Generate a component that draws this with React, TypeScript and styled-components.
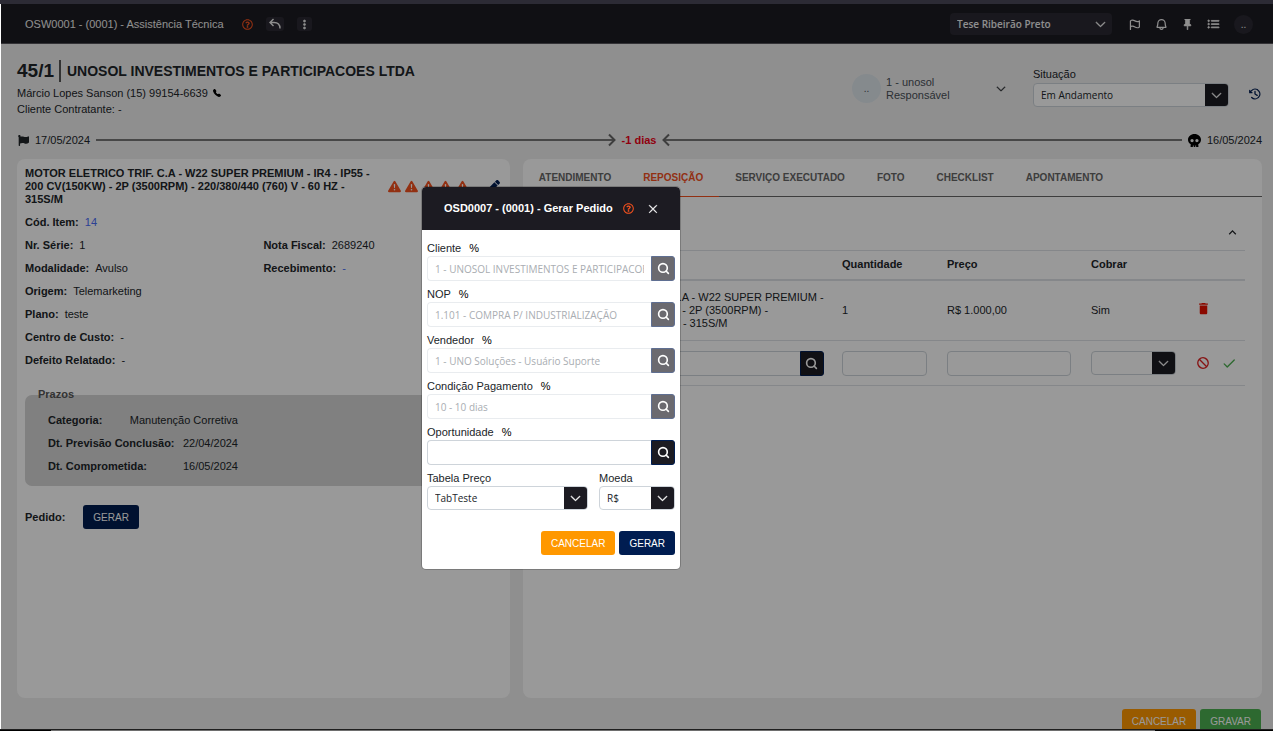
import React from "react";
import styled, { createGlobalStyle, css } from "styled-components";
import {
  BsChevronDown,
  BsExclamationTriangleFill,
  BsListUl,
  BsPinFill,
  BsTelephoneFill,
  BsThreeDotsVertical,
  BsXLg,
} from "react-icons/bs";
import { FaFlag, FaPen, FaRegQuestionCircle, FaSkull } from "react-icons/fa";
import { MdDelete, MdKeyboardArrowUp } from "react-icons/md";
import {
  PiBellBold,
  PiCheckBold,
  PiClockCounterClockwiseBold,
  PiFlagBold,
  PiProhibitBold,
} from "react-icons/pi";
import { LuSearch } from "react-icons/lu";

const ink = "#1c1b22";
const navy = "#001d51";
const orange = "#f4511e";
const inputFont = '"Open Sans", "Noto Sans", sans-serif';

const GlobalStyle = createGlobalStyle`
  * { box-sizing: border-box; }
  body {
    margin: 0;
    overflow: hidden;
    font-family: "Liberation Sans", Arial, sans-serif;
    font-size: 11px;
    line-height: 13px;
    color: #212529;
  }
  button, input, select { font: inherit; color: inherit; margin: 0; }
  button { cursor: pointer; }
  svg { display: block; flex: none; }
`;

const Shell = styled.div`
  display: flex;
  flex-direction: column;
  height: 100vh;
`;

const TopStrip = styled.div`
  flex: none;
  height: 4px;
  background: #2c2b35;
`;

const BottomStrip = styled.div`
  flex: none;
  height: 2px;
  display: flex;
  justify-content: space-between;
  background: #6e6e6e;
  border-top: 1px solid #1f1f1f;
`;

const StripEnd = styled.span<{ $w: number }>`
  width: ${(p) => p.$w}px;
  background: #000;
`;

const Screen = styled.div`
  position: relative;
  flex: 1;
  min-height: 0;
  overflow: hidden;
  display: flex;
  flex-direction: column;
  background: #efefef;
  border-left: 1px solid #fff;
`;

const Header = styled.header`
  flex: none;
  height: 40px;
  display: flex;
  align-items: center;
  justify-content: space-between;
  padding: 1px 20px 0 24px;
  background: ${ink};
  color: #eee;
  border-bottom: 1px solid #55545a;
`;

const HeaderTitle = styled.h1`
  margin: 0 18px 0 0;
  font-size: 11px;
  font-weight: 400;
`;

const Group = styled.div<{ $gap?: number }>`
  display: flex;
  align-items: center;
  gap: ${(p) => p.$gap ?? 0}px;
`;

const IconButton = styled.button<{ $color?: string; $filled?: boolean }>`
  display: inline-flex;
  align-items: center;
  justify-content: center;
  padding: 0;
  border: 0;
  border-radius: 3px;
  background: transparent;
  color: ${(p) => p.$color ?? "inherit"};
  ${(p) =>
    p.$filled &&
    css`
      height: 14px;
      min-width: 14px;
      padding: 0 2px;
      background: #2a2932;
    `}
`;

const SelectBox = styled.div<{ $dark?: boolean }>`
  display: grid;
  height: ${(p) => (p.$dark ? 22 : 24)}px;
  width: ${(p) => (p.$dark ? "162px" : "100%")};
  border-radius: 4px;
  overflow: hidden;
  background: ${(p) => (p.$dark ? "#2a2932" : "#fff")};
  border: ${(p) => (p.$dark ? "0" : "1px solid #ced4da")};

  select {
    grid-area: 1 / 1;
    width: 100%;
    padding: 0 24px 0 7px;
    border: 0;
    appearance: none;
    background: transparent;
    font-family: ${inputFont};
    font-size: 10px;
    font-weight: ${(p) => (p.$dark ? 600 : 400)};
  }
  > span {
    grid-area: 1 / 1;
    justify-self: end;
    width: 23px;
    display: flex;
    align-items: center;
    justify-content: center;
    pointer-events: none;
    color: #fff;
    background: ${(p) => (p.$dark ? "transparent" : ink)};
  }
`;

const HeaderAvatar = styled.span`
  width: 19px;
  height: 19px;
  border-radius: 50%;
  background: #2a2932;
  text-align: center;
  line-height: 19px;
  font-size: 10px;
`;

const Summary = styled.section`
  display: flex;
  justify-content: space-between;
  padding: 16px 11px 0 16px;
`;

const OrderHeading = styled.h2`
  display: flex;
  align-items: center;
  margin: 0 0 3px;
  font-size: 14px;
  line-height: 22px;
  font-weight: 700;
`;

const OrderNumber = styled.span`
  font-size: 19px;
  padding-right: 5px;
  margin-right: 6px;
  border-right: 2px solid #555;
`;

const ContactLine = styled.p`
  display: flex;
  align-items: center;
  gap: 5px;
  margin: 0;
  line-height: 16px;
`;

const Responsible = styled.div`
  display: flex;
  align-items: center;
  justify-content: space-between;
  width: 154px;
  color: #495057;
`;

const Avatar = styled.span`
  width: 29px;
  height: 29px;
  border-radius: 50%;
  background: #dee6ec;
  text-align: center;
  line-height: 29px;
  font-size: 10px;
`;

const Situation = styled.div`
  display: flex;
  align-items: flex-end;
  gap: 19px;
  margin-left: 27px;
  padding-bottom: 2px;
`;

const SituationField = styled.div`
  display: flex;
  flex-direction: column;
  gap: 2px;
  width: 196px;
`;

const HistoryButton = styled(IconButton)`
  height: 26px;
`;

const Timeline = styled.section`
  display: flex;
  align-items: center;
  gap: 6px;
  height: 20px;
  margin: 16px 11px 12px 17px;
`;

const Line = styled.span<{ $dir: "right" | "left" }>`
  flex: 1;
  display: flex;
  align-items: center;
  flex-direction: ${(p) => (p.$dir === "right" ? "row" : "row-reverse")};
  color: #666;
  &::before {
    content: "";
    flex: 1;
    height: 2px;
    background: #777;
  }
  svg {
    margin: ${(p) => (p.$dir === "right" ? "0 0 0 -8px" : "0 -8px 0 0")};
    transform: ${(p) => (p.$dir === "right" ? "none" : "rotate(180deg)")};
  }
`;

const Late = styled.strong`
  color: #f00018;
`;

const Columns = styled.main`
  display: grid;
  grid-template-columns: 2fr 3fr;
  gap: 13px;
  margin: 0 11px 0 16px;
  height: calc(100vh - 192px);
  flex: none;
`;

const Card = styled.section<{ $pad?: string }>`
  min-width: 0;
  background: #fff;
  border-radius: 8px;
  padding: ${(p) => p.$pad ?? "0"};
`;

const ItemHead = styled.div`
  display: flex;
  align-items: center;
  justify-content: space-between;
  margin-bottom: 5px;
`;

const ItemTitle = styled.h3`
  margin: 0;
  width: 345px;
  font-size: 11px;
  line-height: 13px;
`;

const EditButton = styled(IconButton)`
  margin-right: 2px;
`;

const Field = styled.div`
  display: flex;
  align-items: center;
  gap: 6px;
  height: 23px;
`;

const FieldPair = styled.div`
  display: grid;
  grid-template-columns: 1fr 1fr;
`;

const Link = styled.a`
  color: #4a6cf7;
  text-decoration: none;
`;

const Deadlines = styled.fieldset`
  margin: 16px 0 19px;
  padding: 8px 23px;
  border: 0;
  border-radius: 7px;
  background: #d5d5d5;
  legend {
    padding: 0;
    margin-left: -10px;
    height: 13px;
    color: #555;
    font-weight: 700;
  }
`;

const Deadline = styled.div`
  display: flex;
  align-items: center;
  justify-content: space-between;
  width: 190px;
  height: 23px;
`;

const Button = styled.button<{ $bg: string }>`
  height: 24px;
  padding: 0 10px;
  border: 0;
  border-radius: 3px;
  background: ${(p) => p.$bg};
  color: #fff;
  font-size: 10px;
`;

const Tabs = styled.nav`
  display: flex;
  height: 38px;
  border-bottom: 1px solid #666;
`;

const Tab = styled.button<{ $active?: boolean }>`
  height: 38px;
  padding: 0 16px;
  border: 0;
  border-bottom: 1px solid ${(p) => (p.$active ? orange : "transparent")};
  background: transparent;
  color: ${(p) => (p.$active ? orange : "#666")};
  font-size: 10px;
  font-weight: 700;
`;

const TabBody = styled.div`
  padding: 0 17px;
`;

const Collapse = styled.div`
  display: flex;
  align-items: center;
  justify-content: flex-end;
  height: 53px;
  padding: 17px 5px 0 0;
`;

const Table = styled.table`
  width: 100%;
  table-layout: fixed;
  border-collapse: collapse;
  th, td {
    padding: 0 10px;
    text-align: left;
    border-bottom: 1px solid #dee2e6;
  }
  th:first-child, td:first-child { padding: 0 8px 0 0; }
  th {
    height: 29px;
    border-top: 1px solid #dee2e6;
    border-bottom: 2px solid #dee2e6;
  }
`;

const Row = styled.tr<{ $h: number }>`
  height: ${(p) => p.$h}px;
`;

const TextInput = styled.input`
  display: block;
  width: 100%;
  min-width: 0;
  height: 25px;
  padding: 0 7px;
  border: 1px solid #ced4da;
  border-radius: 4px;
  background: #fff;
  font-family: ${inputFont};
  font-size: 10px;
  &:disabled { color: #a9adb2; border-color: #e9ecef; }
`;

const Lookup = styled.div`
  display: flex;
  ${TextInput} { border-radius: 4px 0 0 4px; border-right: 0; }
`;

const LookupButton = styled.button`
  flex: none;
  display: flex;
  align-items: center;
  justify-content: center;
  width: 24px;
  height: 25px;
  padding: 0;
  border: 1px solid ${navy};
  border-radius: 0 3px 3px 0;
  background: ${ink};
  color: #fff;
  &:disabled { background: #6b6a70; border-color: #5f6f92; }
`;

const Footer = styled.footer`
  display: flex;
  justify-content: flex-end;
  gap: 4px;
  padding: 11px 12px 0 0;
`;

const Overlay = styled.div`
  position: absolute;
  inset: 0 0 0 -1px;
  background: rgba(0, 0, 0, 0.4);
`;

const Dialog = styled.div`
  position: absolute;
  top: 183px;
  left: 422px;
  width: 258px;
  border-radius: 4px;
  overflow: hidden;
  background: #fff;
  box-shadow: 0 0 0 1px rgba(0, 0, 0, 0.2);
`;

const DialogHeader = styled.header`
  display: flex;
  align-items: center;
  height: 43px;
  padding-left: 22px;
  background: ${ink};
  color: #fff;
  h2 { margin: 0 10px 0 0; font-size: 11px; line-height: 13px; }
`;

const DialogBody = styled.form`
  padding: 9px 5px 14px;
  display: flex;
  flex-direction: column;
  gap: 4px;
`;

const Control = styled.div`
  display: flex;
  flex-direction: column;
  label { height: 17px; line-height: 18px; color: #212529; }
  label span { margin-left: 8px; color: #000; }
`;

const ControlPair = styled.div`
  display: grid;
  grid-template-columns: 161px 1fr;
  gap: 11px;
`;

const DialogActions = styled.div`
  display: flex;
  justify-content: flex-end;
  gap: 4px;
  margin-top: 17px;
`;

const CloseButton = styled(IconButton)`
  margin-left: 14px;
`;

function Arrow() {
  return (
    <svg width="9" height="14" viewBox="0 0 9 14" fill="none" stroke="currentColor" strokeWidth="2">
      <path d="M2 1.5 7.5 7 2 12.5" />
    </svg>
  );
}

function BackArrow() {
  return (
    <svg width="14" height="12" viewBox="0 0 14 12" fill="none" stroke="currentColor" strokeWidth="1.4">
      <path d="M5.5 1 2 4.5 5.5 8M2 4.5h4c3.6 0 6 2.200 6 6" />
    </svg>
  );
}

function SelectField({ id, label, value, dark }: { id: string; label?: string; value: string; dark?: boolean }) {
  return (
    <SelectBox $dark={dark}>
      <select id={id} aria-label={label} defaultValue={value}>
        <option>{value}</option>
      </select>
      <span>
        <BsChevronDown size={11} stroke="currentColor" strokeWidth={1} />
      </span>
    </SelectBox>
  );
}

function LookupField({ id, label, value, disabled }: { id: string; label?: string; value?: string; disabled?: boolean }) {
  return (
    <Lookup>
      <TextInput id={id} aria-label={label} defaultValue={value} disabled={disabled} />
      <LookupButton type="button" aria-label="Pesquisar" disabled={disabled}>
        <LuSearch size={13} strokeWidth={3} />
      </LookupButton>
    </Lookup>
  );
}

const tabs = ["ATENDIMENTO", "REPOSIÇÃO", "SERVIÇO EXECUTADO", "FOTO", "CHECKLIST", "APONTAMENTO"];

const lookups = [
  { id: "cliente", label: "Cliente", value: "1 - UNOSOL INVESTIMENTOS E PARTICIPACOES LTDA", disabled: true },
  { id: "nop", label: "NOP", value: "1.101 - COMPRA P/ INDUSTRIALIZAÇÃO", disabled: true },
  { id: "vendedor", label: "Vendedor", value: "1 - UNO Soluções - Usuário Suporte", disabled: true },
  { id: "condicao", label: "Condição Pagamento", value: "10 - 10 dias", disabled: true },
  { id: "oportunidade", label: "Oportunidade", value: "", disabled: false },
];

export default function App() {
  return (
    <Shell>
      <GlobalStyle />
      <TopStrip />
      <Screen>
        <Header>
          <Group>
            <HeaderTitle>OSW0001 - (0001) - Assistência Técnica</HeaderTitle>
            <Group $gap={13}>
              <IconButton aria-label="Ajuda" $color={orange}>
                <FaRegQuestionCircle size={11} />
              </IconButton>
              <IconButton aria-label="Voltar" $filled>
                <BackArrow />
              </IconButton>
              <IconButton aria-label="Mais opções" $filled>
                <BsThreeDotsVertical size={11} stroke="currentColor" strokeWidth={1} />
              </IconButton>
            </Group>
          </Group>
          <Group $gap={16}>
            <SelectField id="filial" label="Filial" value="Tese Ribeirão Preto" dark />
            <Group $gap={14}>
              <IconButton aria-label="Sinalizações"><PiFlagBold size={13} /></IconButton>
              <IconButton aria-label="Notificações"><PiBellBold size={13} /></IconButton>
              <IconButton aria-label="Fixar"><BsPinFill size={11} stroke="currentColor" strokeWidth={1} /></IconButton>
              <IconButton aria-label="Lista"><BsListUl size={13} stroke="currentColor" strokeWidth={1} /></IconButton>
              <HeaderAvatar>..</HeaderAvatar>
            </Group>
          </Group>
        </Header>

        <Summary>
          <div>
            <OrderHeading>
              <OrderNumber>45/1</OrderNumber>
              UNOSOL INVESTIMENTOS E PARTICIPACOES LTDA
            </OrderHeading>
            <ContactLine>
              Márcio Lopes Sanson (15) 99154-6639 <BsTelephoneFill size={8} color="#000" />
            </ContactLine>
            <ContactLine>Cliente Contratante: -</ContactLine>
          </div>
          <Group>
            <Responsible>
              <Group $gap={5}>
                <Avatar>..</Avatar>
                <div>
                  1 - unosol
                  <br />
                  Responsável
                </div>
              </Group>
              <IconButton aria-label="Trocar responsável" $color="#212529">
                <BsChevronDown size={10} stroke="currentColor" strokeWidth={1} />
              </IconButton>
            </Responsible>
            <Situation>
              <SituationField>
                <label htmlFor="situacao">Situação</label>
                <SelectField id="situacao" value="Em Andamento" />
              </SituationField>
              <HistoryButton aria-label="Histórico" $color={navy}>
                <PiClockCounterClockwiseBold size={14} />
              </HistoryButton>
            </Situation>
          </Group>
        </Summary>

        <Timeline>
          <FaFlag size={11} />
          <span>17/05/2024</span>
          <Line $dir="right"><Arrow /></Line>
          <Late>-1 dias</Late>
          <Line $dir="left"><Arrow /></Line>
          <FaSkull size={13} color="#000" />
          <span>16/05/2024</span>
        </Timeline>

        <Columns>
          <Card $pad="8px 8px 0">
            <ItemHead>
              <ItemTitle>
                MOTOR ELETRICO TRIF. C.A - W22 SUPER PREMIUM - IR4 - IP55 - 200 CV(150KW) - 2P (3500RPM) -
                220/380/440 (760) V - 60 HZ - 315S/M
              </ItemTitle>
              <Group $gap={4}>
                {[0, 1, 2, 3, 4].map((n) => (
                  <BsExclamationTriangleFill key={n} size={13} color={orange} />
                ))}
              </Group>
              <EditButton aria-label="Editar" $color={navy}><FaPen size={13} /></EditButton>
            </ItemHead>
            <Field><b>Cód. Item:</b> <Link href="#item">14</Link></Field>
            <FieldPair>
              <Field><b>Nr. Série:</b> 1</Field>
              <Field><b>Nota Fiscal:</b> 2689240</Field>
              <Field><b>Modalidade:</b> Avulso</Field>
              <Field><b>Recebimento:</b> <Link href="#recebimento">-</Link></Field>
            </FieldPair>
            <Field><b>Origem:</b> Telemarketing</Field>
            <Field><b>Plano:</b> teste</Field>
            <Field><b>Centro de Custo:</b> -</Field>
            <Field><b>Defeito Relatado:</b> -</Field>
            <Deadlines>
              <legend>Prazos</legend>
              <Deadline><b>Categoria:</b> Manutenção Corretiva</Deadline>
              <Deadline><b>Dt. Previsão Conclusão:</b> 22/04/2024</Deadline>
              <Deadline><b>Dt. Comprometida:</b> 16/05/2024</Deadline>
            </Deadlines>
            <Group $gap={18}>
              <b>Pedido:</b>
              <Button $bg={navy}>GERAR</Button>
            </Group>
          </Card>

          <Card>
            <Tabs>
              {tabs.map((t) => (
                <Tab key={t} $active={t === "REPOSIÇÃO"}>{t}</Tab>
              ))}
            </Tabs>
            <TabBody>
              <Collapse>
                <IconButton aria-label="Recolher"><MdKeyboardArrowUp size={15} /></IconButton>
              </Collapse>
              <Table>
                <colgroup>
                  <col />
                  <col style={{ width: 105 }} />
                  <col style={{ width: 144 }} />
                  <col style={{ width: 105 }} />
                  <col style={{ width: 59 }} />
                </colgroup>
                <thead>
                  <tr>
                    <th>Item</th>
                    <th>Quantidade</th>
                    <th>Preço</th>
                    <th>Cobrar</th>
                    <th aria-label="Ações" />
                  </tr>
                </thead>
                <tbody>
                  <Row $h={61}>
                    <td>
                      MOTOR ELETRICO TRIF. C.A - W22 SUPER PREMIUM - IR4 - IP55 - 200 CV(150KW) - 2P (3500RPM) -
                      220/380/440 (760) V - 60 HZ - 315S/M
                    </td>
                    <td>1</td>
                    <td>R$ 1.000,00</td>
                    <td>Sim</td>
                    <td>
                      <IconButton aria-label="Excluir" $color="#e81000"><MdDelete size={15} /></IconButton>
                    </td>
                  </Row>
                  <Row $h={45}>
                    <td><LookupField id="novo-item" label="Item" /></td>
                    <td><TextInput aria-label="Quantidade" /></td>
                    <td><TextInput aria-label="Preço" /></td>
                    <td><SelectField id="cobrar" label="Cobrar" value="" /></td>
                    <td>
                      <Group $gap={12}>
                        <IconButton aria-label="Descartar" $color="#e02020"><PiProhibitBold size={14} /></IconButton>
                        <IconButton aria-label="Confirmar" $color="#4caf50"><PiCheckBold size={14} /></IconButton>
                      </Group>
                    </td>
                  </Row>
                </tbody>
              </Table>
            </TabBody>
          </Card>
        </Columns>

        <Footer>
          <Button $bg="#ff9800">CANCELAR</Button>
          <Button $bg="#4caf50">GRAVAR</Button>
        </Footer>

        <Overlay>
          <Dialog role="dialog" aria-modal="true" aria-labelledby="dialog-title">
            <DialogHeader>
              <h2 id="dialog-title">OSD0007 - (0001) - Gerar Pedido</h2>
              <IconButton aria-label="Ajuda" $color={orange}><FaRegQuestionCircle size={11} /></IconButton>
              <CloseButton aria-label="Fechar"><BsXLg size={10} stroke="currentColor" strokeWidth={1} /></CloseButton>
            </DialogHeader>
            <DialogBody>
              {lookups.map((f) => (
                <Control key={f.id}>
                  <label htmlFor={f.id}>{f.label}<span>%</span></label>
                  <LookupField id={f.id} value={f.value} disabled={f.disabled} />
                </Control>
              ))}
              <ControlPair>
                <Control>
                  <label htmlFor="tabela">Tabela Preço</label>
                  <SelectField id="tabela" value="TabTeste" />
                </Control>
                <Control>
                  <label htmlFor="moeda">Moeda</label>
                  <SelectField id="moeda" value="R$" />
                </Control>
              </ControlPair>
              <DialogActions>
                <Button type="button" $bg="#ff9800">CANCELAR</Button>
                <Button type="button" $bg={navy}>GERAR</Button>
              </DialogActions>
            </DialogBody>
          </Dialog>
        </Overlay>
      </Screen>
      <BottomStrip>
        <StripEnd $w={51} />
        <StripEnd $w={118} />
      </BottomStrip>
    </Shell>
  );
}
